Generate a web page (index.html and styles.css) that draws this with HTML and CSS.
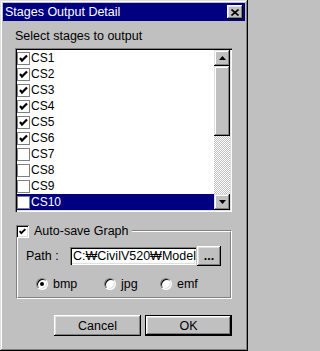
FILE: index.html
```html
<!DOCTYPE html>
<html>
<head>
<meta charset="utf-8">
<link rel="stylesheet" href="styles.css">
</head>
<body>
<div class="window">
  <div class="titlebar">
    <span class="title">Stages Output Detail</span>
    <button class="close" aria-label="Close">
      <svg width="8" height="7" viewBox="0 0 8 7"><path d="M0.5 0.5 L7.5 6.5 M7.5 0.5 L0.5 6.5" stroke="#000" stroke-width="1.6" fill="none"/></svg>
    </button>
  </div>
  <div class="content">
    <div class="label">Select stages to output</div>
    <div class="listbox">
      <div class="items">
        <div class="row"><span class="flatcheck"><svg class="tick" viewBox="0 0 11 11"><path d="M2 5 L4 7.5 L9 2.5" /></svg></span><span class="rowtext">CS1</span></div>
        <div class="row"><span class="flatcheck"><svg class="tick" viewBox="0 0 11 11"><path d="M2 5 L4 7.5 L9 2.5" /></svg></span><span class="rowtext">CS2</span></div>
        <div class="row"><span class="flatcheck"><svg class="tick" viewBox="0 0 11 11"><path d="M2 5 L4 7.5 L9 2.5" /></svg></span><span class="rowtext">CS3</span></div>
        <div class="row"><span class="flatcheck"><svg class="tick" viewBox="0 0 11 11"><path d="M2 5 L4 7.5 L9 2.5" /></svg></span><span class="rowtext">CS4</span></div>
        <div class="row"><span class="flatcheck"><svg class="tick" viewBox="0 0 11 11"><path d="M2 5 L4 7.5 L9 2.5" /></svg></span><span class="rowtext">CS5</span></div>
        <div class="row"><span class="flatcheck"><svg class="tick" viewBox="0 0 11 11"><path d="M2 5 L4 7.5 L9 2.5" /></svg></span><span class="rowtext">CS6</span></div>
        <div class="row"><span class="flatcheck"></span><span class="rowtext">CS7</span></div>
        <div class="row"><span class="flatcheck"></span><span class="rowtext">CS8</span></div>
        <div class="row"><span class="flatcheck"></span><span class="rowtext">CS9</span></div>
        <div class="row selected"><span class="flatcheck"></span><span class="rowtext">CS10</span></div>
      </div>
      <div class="scrollbar">
        <div class="sbtn"><svg width="7" height="4" viewBox="0 0 7 4"><path d="M3.5 0 L7 4 L0 4 Z" fill="#000"/></svg></div>
        <div class="thumb"></div>
        <div class="track"></div>
        <div class="sbtn"><svg width="7" height="4" viewBox="0 0 7 4"><path d="M0 0 L7 0 L3.5 4 Z" fill="#000"/></svg></div>
      </div>
    </div>

    <div class="group">
      <div class="group-head">
        <span class="check3d"><svg class="tick" viewBox="0 0 11 11"><path d="M2 5 L4 7.5 L9 2.5" /></svg></span>
        <span class="group-title">Auto-save Graph</span>
        <div class="head-line"><div class="head-line-in"></div></div>
      </div>
      <div class="group-body">
        <div class="group-body-in">
          <div class="path-row">
            <span class="path-label">Path :</span>
            <div class="field">C:₩CivilV520₩Model</div>
            <button class="btn dots">...</button>
          </div>
          <div class="radio-row">
            <div class="radio-item"><span class="radio on"></span><span>bmp</span></div>
            <div class="radio-item"><span class="radio"></span><span>jpg</span></div>
            <div class="radio-item"><span class="radio"></span><span>emf</span></div>
          </div>
        </div>
      </div>
    </div>

    <div class="buttons">
      <button class="btn action">Cancel</button>
      <button class="btn action default">OK</button>
    </div>
  </div>
</div>
</body>
</html>
```

FILE: styles.css
```css
html, body {
  margin: 0;
  padding: 0;
  background: #c0c0c0;
}
body {
  font-family: "Liberation Sans", Arial, sans-serif;
  font-size: 12.5px;
  color: #000;
}
.window {
  width: 248px;
  height: 351px;
  box-sizing: border-box;
  background: #c0c0c0;
  padding: 3px;
  display: flex;
  flex-direction: column;
  box-shadow: inset -1px -1px #000, inset 1px 1px #dfdfdf, inset -2px -2px #808080, inset 2px 2px #fff;
}
.titlebar {
  height: 18px;
  background: #000080;
  color: #fff;
  display: flex;
  align-items: center;
  padding-left: 2px;
  flex-shrink: 0;
}
.title {
  flex: 1;
  font-size: 12.5px;
  line-height: 15px;
}
.close {
  width: 16px;
  height: 14px;
  margin-right: 2px;
  padding: 0;
  border: none;
  background: #c0c0c0;
  display: flex;
  align-items: center;
  justify-content: center;
  box-shadow: inset -1px -1px #000, inset 1px 1px #fff, inset -2px -2px #808080, inset 2px 2px #dfdfdf;
}
.close svg { display: block; }
.content {
  padding: 0 12px;
  display: flex;
  flex-direction: column;
}
.label {
  margin-top: 8px;
  line-height: 15px;
}
.listbox {
  margin-top: 4px;
  width: 217px;
  height: 164px;
  box-sizing: border-box;
  padding: 2px;
  background: #fff;
  display: flex;
  box-shadow: inset 1px 1px #808080, inset 2px 2px #000, inset -1px -1px #fff, inset -2px -2px #dfdfdf;
}
.items {
  flex: 1;
  display: flex;
  flex-direction: column;
}
.row {
  height: 16px;
  display: flex;
  align-items: center;
  font-size: 12px;
}
.row.selected {
  background: #000080;
  color: #fff;
}
.flatcheck {
  width: 11px;
  height: 11px;
  border: 1px solid #808080;
  background: #fff;
  display: flex;
  align-items: center;
  justify-content: center;
  flex-shrink: 0;
}
.rowtext {
  margin-left: 1px;
  line-height: 14px;
}
.tick {
  width: 11px;
  height: 11px;
  display: block;
}
.tick path {
  fill: none;
  stroke: #000;
  stroke-width: 2.2;
}
.scrollbar {
  width: 16px;
  display: flex;
  flex-direction: column;
}
.sbtn {
  height: 16px;
  background: #c0c0c0;
  display: flex;
  align-items: center;
  justify-content: center;
  box-shadow: inset -1px -1px #000, inset 1px 1px #dfdfdf, inset -2px -2px #808080, inset 2px 2px #fff;
}
.sbtn svg { display: block; }
.thumb {
  height: 70px;
  background: #c0c0c0;
  box-shadow: inset -1px -1px #000, inset 1px 1px #dfdfdf, inset -2px -2px #808080, inset 2px 2px #fff;
}
.track {
  flex: 1;
  background: repeating-conic-gradient(#c0c0c0 0 25%, #fff 0 50%) 0 0 / 2px 2px;
}
.group {
  margin-top: 13px;
  margin-left: 1px;
  width: 216px;
  display: flex;
  flex-direction: column;
}
.group-head {
  height: 13px;
  display: flex;
  align-items: center;
}
.check3d {
  width: 13px;
  height: 13px;
  box-sizing: border-box;
  background: #fff;
  display: flex;
  align-items: center;
  justify-content: center;
  flex-shrink: 0;
  box-shadow: inset 1px 1px #808080, inset -1px -1px #fff, inset 2px 2px #000, inset -2px -2px #dfdfdf;
}
.check3d .tick { width: 9px; height: 9px; }
.group-title {
  margin-left: 5px;
  line-height: 15px;
}
.head-line {
  flex: 1;
  align-self: flex-end;
  height: 8px;
  margin-left: 3px;
  box-sizing: border-box;
  border-top: 1px solid #808080;
  border-right: 1px solid #fff;
}
.head-line-in {
  height: 100%;
  box-sizing: border-box;
  border-top: 1px solid #fff;
  border-right: 1px solid #808080;
}
.group-body {
  border-left: 1px solid #808080;
  border-right: 1px solid #fff;
  border-bottom: 1px solid #fff;
}
.group-body-in {
  border-left: 1px solid #fff;
  border-right: 1px solid #808080;
  border-bottom: 1px solid #808080;
  padding: 8px 0 6px 0;
}
.path-row {
  display: flex;
  align-items: center;
  height: 20px;
  padding-left: 8px;
}
.path-label {
  width: 44px;
  flex-shrink: 0;
}
.field {
  width: 126px;
  height: 18px;
  box-sizing: border-box;
  background: #fff;
  padding: 0 0 0 3px;
  line-height: 18px;
  white-space: nowrap;
  overflow: hidden;
  box-shadow: inset 1px 1px #808080, inset 2px 2px #000, inset -1px -1px #fff, inset -2px -2px #dfdfdf;
}
.btn {
  font-family: "Liberation Sans", Arial, sans-serif;
  font-size: 12.5px;
  color: #000;
  background: #c0c0c0;
  border: none;
  padding: 0;
  box-shadow: inset -1px -1px #000, inset 1px 1px #fff, inset -2px -2px #808080, inset 2px 2px #dfdfdf;
}
.dots {
  width: 24px;
  height: 20px;
  margin-left: 1px;
  font-weight: bold;
  line-height: 14px;
}
.radio-row {
  margin-top: 11px;
  height: 14px;
  padding-left: 18px;
  display: grid;
  grid-template-columns: 68px 56px auto;
  align-items: center;
}
.radio-item {
  display: flex;
  align-items: center;
}
.radio {
  width: 12px;
  height: 12px;
  box-sizing: border-box;
  border-radius: 50%;
  background: #fff;
  border: 1px solid;
  border-color: #808080 #fff #fff #808080;
  box-shadow: inset 1px 1px #000, inset -1px -1px #dfdfdf;
  margin-right: 5px;
  display: flex;
  align-items: center;
  justify-content: center;
  flex-shrink: 0;
}
.radio.on::after {
  content: "";
  width: 4px;
  height: 4px;
  border-radius: 50%;
  background: #000;
}
.buttons {
  margin-top: 16px;
  display: flex;
  justify-content: flex-end;
  gap: 4px;
  padding-right: 1px;
}
.action {
  width: 87px;
  height: 21px;
}
.default {
  box-shadow: inset 0 0 0 1px #000, inset -2px -2px #000, inset 2px 2px #fff, inset -3px -3px #808080, inset 3px 3px #dfdfdf;
}
```
